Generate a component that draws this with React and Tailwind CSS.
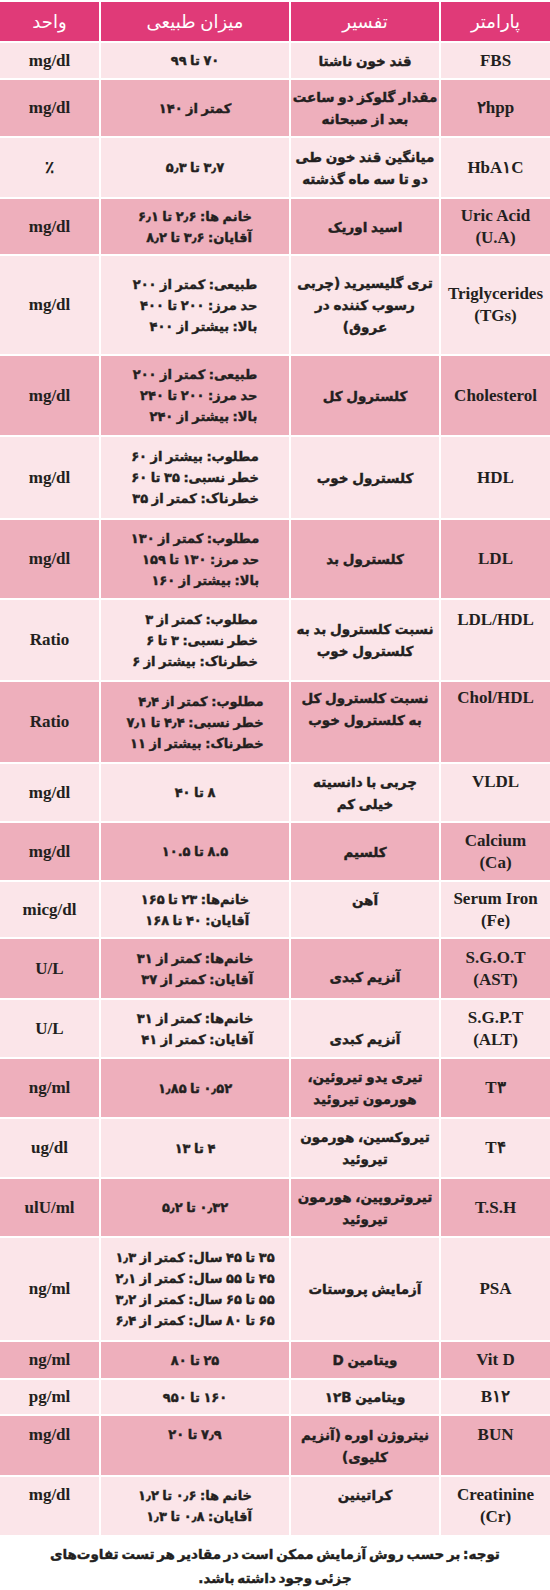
import React from 'react';

const fa = "font-['DejaVu_Sans','Noto_Sans',sans-serif] [word-spacing:-1px]";
const thick = '[-webkit-text-stroke:0.4px_#231f20]';
const en = "font-['Liberation_Serif',serif]";
const D = 'bg-[#eeafbc]';
const L = 'bg-[#fbe5e9]';

const rows = [
  { h: 'h-[35px]', bg: L, p: ['FBS'], d: ['قند خون ناشتا'], r: ['۷۰ تا ۹۹'], u: 'mg/dl' },
  { h: 'h-[56px]', bg: D, p: ['۲hpp'], d: ['مقدار گلوکز دو ساعت', 'بعد از صبحانه'], r: ['کمتر از ۱۴۰'], u: 'mg/dl' },
  { h: 'h-[59px]', bg: L, p: ['HbA۱C'], d: ['میانگین قند خون طی', 'دو تا سه ماه گذشته'], r: ['۳٫۷ تا ۵٫۳'], u: '٪' },
  { h: 'h-[55px]', bg: D, p: ['Uric Acid', '(U.A)'], d: ['اسید اوریک'], r: ['خانم ها: ۲٫۶ تا ۶٫۱', 'آقایان: ۳٫۶ تا ۸٫۲'], u: 'mg/dl' },
  { h: 'h-[98px]', bg: L, p: ['Triglycerides', '(TGs)'], d: ['تری گلیسیرید (چربی', 'رسوب کننده در', 'عروق)'], r: ['طبیعی: کمتر از ۲۰۰', 'حد مرز: ۲۰۰ تا ۴۰۰', 'بالا: بیشتر از ۴۰۰'], u: 'mg/dl' },
  { h: 'h-[79px]', bg: D, p: ['Cholesterol'], d: ['کلسترول کل'], r: ['طبیعی: کمتر از ۲۰۰', 'حد مرز: ۲۰۰ تا ۲۴۰', 'بالا: بیشتر از ۲۴۰'], u: 'mg/dl' },
  { h: 'h-[81px]', bg: L, p: ['HDL'], d: ['کلسترول خوب'], r: ['مطلوب: بیشتر از ۶۰', 'خطر نسبی: ۳۵ تا ۶۰', 'خطرناک: کمتر از ۳۵'], u: 'mg/dl' },
  { h: 'h-[78px]', bg: D, p: ['LDL'], d: ['کلسترول بد'], r: ['مطلوب: کمتر از ۱۳۰', 'حد مرز: ۱۳۰ تا ۱۵۹', 'بالا: بیشتر از ۱۶۰'], u: 'mg/dl' },
  { h: 'h-[80px]', bg: L, p: ['LDL/HDL'], pa: 'items-start pt-[9px]', d: ['نسبت کلسترول بد به', 'کلسترول خوب'], r: ['مطلوب: کمتر از ۳', 'خطر نسبی: ۳ تا ۶', 'خطرناک: بیشتر از ۶'], u: 'Ratio' },
  { h: 'h-[80px]', bg: D, p: ['Chol/HDL'], pa: 'items-start pt-[5px]', d: ['نسبت کلسترول کل', 'به کلسترول خوب'], da: 'items-start pt-[5px]', r: ['مطلوب: کمتر از ۴٫۴', 'خطر نسبی: ۴٫۴ تا ۷٫۱', 'خطرناک: بیشتر از ۱۱'], u: 'Ratio' },
  { h: 'h-[57px]', bg: L, p: ['VLDL'], pa: 'items-start pt-[7px]', d: ['چربی با دانسیته', 'خیلی کم'], da: 'items-start pt-[7px]', r: ['۸ تا ۴۰'], u: 'mg/dl' },
  { h: 'h-[57px]', bg: D, p: ['Calcium', '(Ca)'], d: ['کلسیم'], r: ['۸.۵ تا ۱۰.۵'], u: 'mg/dl' },
  { h: 'h-[55px]', bg: L, p: ['Serum Iron', '(Fe)'], d: ['آهن'], da: 'items-start pt-[7px]', r: ['خانم‌ها: ۲۳ تا ۱۶۵', 'آقایان: ۴۰ تا ۱۶۸'], u: 'micg/dl' },
  { h: 'h-[59px]', bg: D, p: ['S.G.O.T', '(AST)'], d: ['آنزیم کبدی'], da: 'items-start pt-[27px]', r: ['خانم‌ها: کمتر از ۳۱', 'آقایان: کمتر از ۳۷'], u: 'U/L' },
  { h: 'h-[57px]', bg: L, p: ['S.G.P.T', '(ALT)'], d: ['آنزیم کبدی'], da: 'items-start pt-[28px]', r: ['خانم‌ها: کمتر از ۳۱', 'آقایان: کمتر از ۴۱'], u: 'U/L' },
  { h: 'h-[58px]', bg: D, p: ['T۳'], d: ['تیری یدو تیروئین،', 'هورمون تیروئید'], r: ['۰٫۵۲ تا ۱٫۸۵'], u: 'ng/ml' },
  { h: 'h-[58px]', bg: L, p: ['T۴'], d: ['تیروکسین، هورمون', 'تیروئید'], r: ['۴ تا ۱۳'], u: 'ug/dl' },
  { h: 'h-[57px]', bg: D, p: ['T.S.H'], d: ['تیروتروپین، هورمون', 'تیروئید'], r: ['۰٫۳۲ تا ۵٫۲'], u: 'ulU/ml' },
  { h: 'h-[102px]', bg: L, p: ['PSA'], d: ['آزمایش پروستات'], r: ['۳۵ تا ۴۵ سال: کمتر از ۱٫۳', '۴۵ تا ۵۵ سال: کمتر از ۲٫۱', '۵۵ تا ۶۵ سال: کمتر از ۳٫۲', '۶۵ تا ۸۰ سال: کمتر از ۶٫۴'], u: 'ng/ml' },
  { h: 'h-[36px]', bg: D, p: ['Vit D'], d: ['ویتامین D'], r: ['۲۵ تا ۸۰'], u: 'ng/ml' },
  { h: 'h-[34px]', bg: L, p: ['B۱۲'], d: ['ویتامین ۱۲B'], r: ['۱۶۰ تا ۹۵۰'], u: 'pg/ml' },
  { h: 'h-[59px]', bg: D, p: ['BUN'], pa: 'items-start pt-[8px]', d: ['نیتروژن اوره (آنزیم', 'کلیوی)'], da: 'items-start pt-[8px]', r: ['۷٫۹ تا ۲۰'], ra: 'items-start pt-[8px]', u: 'mg/dl', ua: 'items-start pt-[8px]' },
  { h: 'h-[58px]', bg: L, p: ['Creatinine', '(Cr)'], d: ['کراتینین'], da: 'items-start pt-[7px]', r: ['خانم ها: ۰٫۶ تا ۱٫۲', 'آقایان: ۰٫۸ تا ۱٫۳'], u: 'mg/dl', ua: 'items-start pt-[7px]' },
];

const Cell = ({ bg, align, children }) => (
  <div className={`flex justify-center overflow-hidden ${bg} ${align || 'items-center'}`}>{children}</div>
);

const App = () => {
  return (
    <div className="w-[550px] h-[1590px] bg-white pt-[2px] text-[#231f20] overflow-hidden">
      <div dir="rtl" className="grid grid-cols-[109px_148px_188px_99px] gap-[2px]">
        {/* header */}
        {['پارامتر', 'تفسیر', 'میزان طبیعی', 'واحد'].map((t) => (
          <div key={t} className={`h-[39px] bg-[#e03a78] flex items-center justify-center text-white text-[18px] ${fa}`}>
            {t}
          </div>
        ))}

        {rows.map((row, i) => (
          <React.Fragment key={i}>
            <Cell bg={`${row.h} ${row.bg}`} align={row.pa}>
              <div dir="ltr" className={`${en} font-bold text-[17px] leading-[22px] text-center whitespace-nowrap`}>
                {row.p.map((l) => <div key={l}>{l}</div>)}
              </div>
            </Cell>
            <Cell bg={`${row.h} ${row.bg}`} align={row.da}>
              <div className={`${fa} ${thick} font-bold text-[13.5px] leading-[22px] text-center whitespace-nowrap`}>
                {row.d.map((l) => <div key={l}>{l}</div>)}
              </div>
            </Cell>
            <Cell bg={`${row.h} ${row.bg}`} align={row.ra}>
              <div className={`${fa} ${thick} font-bold text-[13px] leading-[21px] text-right whitespace-nowrap`}>
                {row.r.map((l) => <div key={l}>{l}</div>)}
              </div>
            </Cell>
            <Cell bg={`${row.h} ${row.bg}`} align={row.ua}>
              <div dir="ltr" className={`${en} font-bold text-[17px] leading-[22px] whitespace-nowrap`}>{row.u}</div>
            </Cell>
          </React.Fragment>
        ))}
      </div>

      {/* note */}
      <div dir="rtl" className={`pt-[7px] text-center whitespace-nowrap ${fa} ${thick} font-bold text-[13.5px] leading-[24px] [word-spacing:-2px]`}>
        <div>توجه: بر حسب روش آزمایش ممکن است در مقادیر هر تست تفاوت‌های</div>
        <div>جزئی وجود داشته باشد.</div>
      </div>
    </div>
  );
};

export default App;
